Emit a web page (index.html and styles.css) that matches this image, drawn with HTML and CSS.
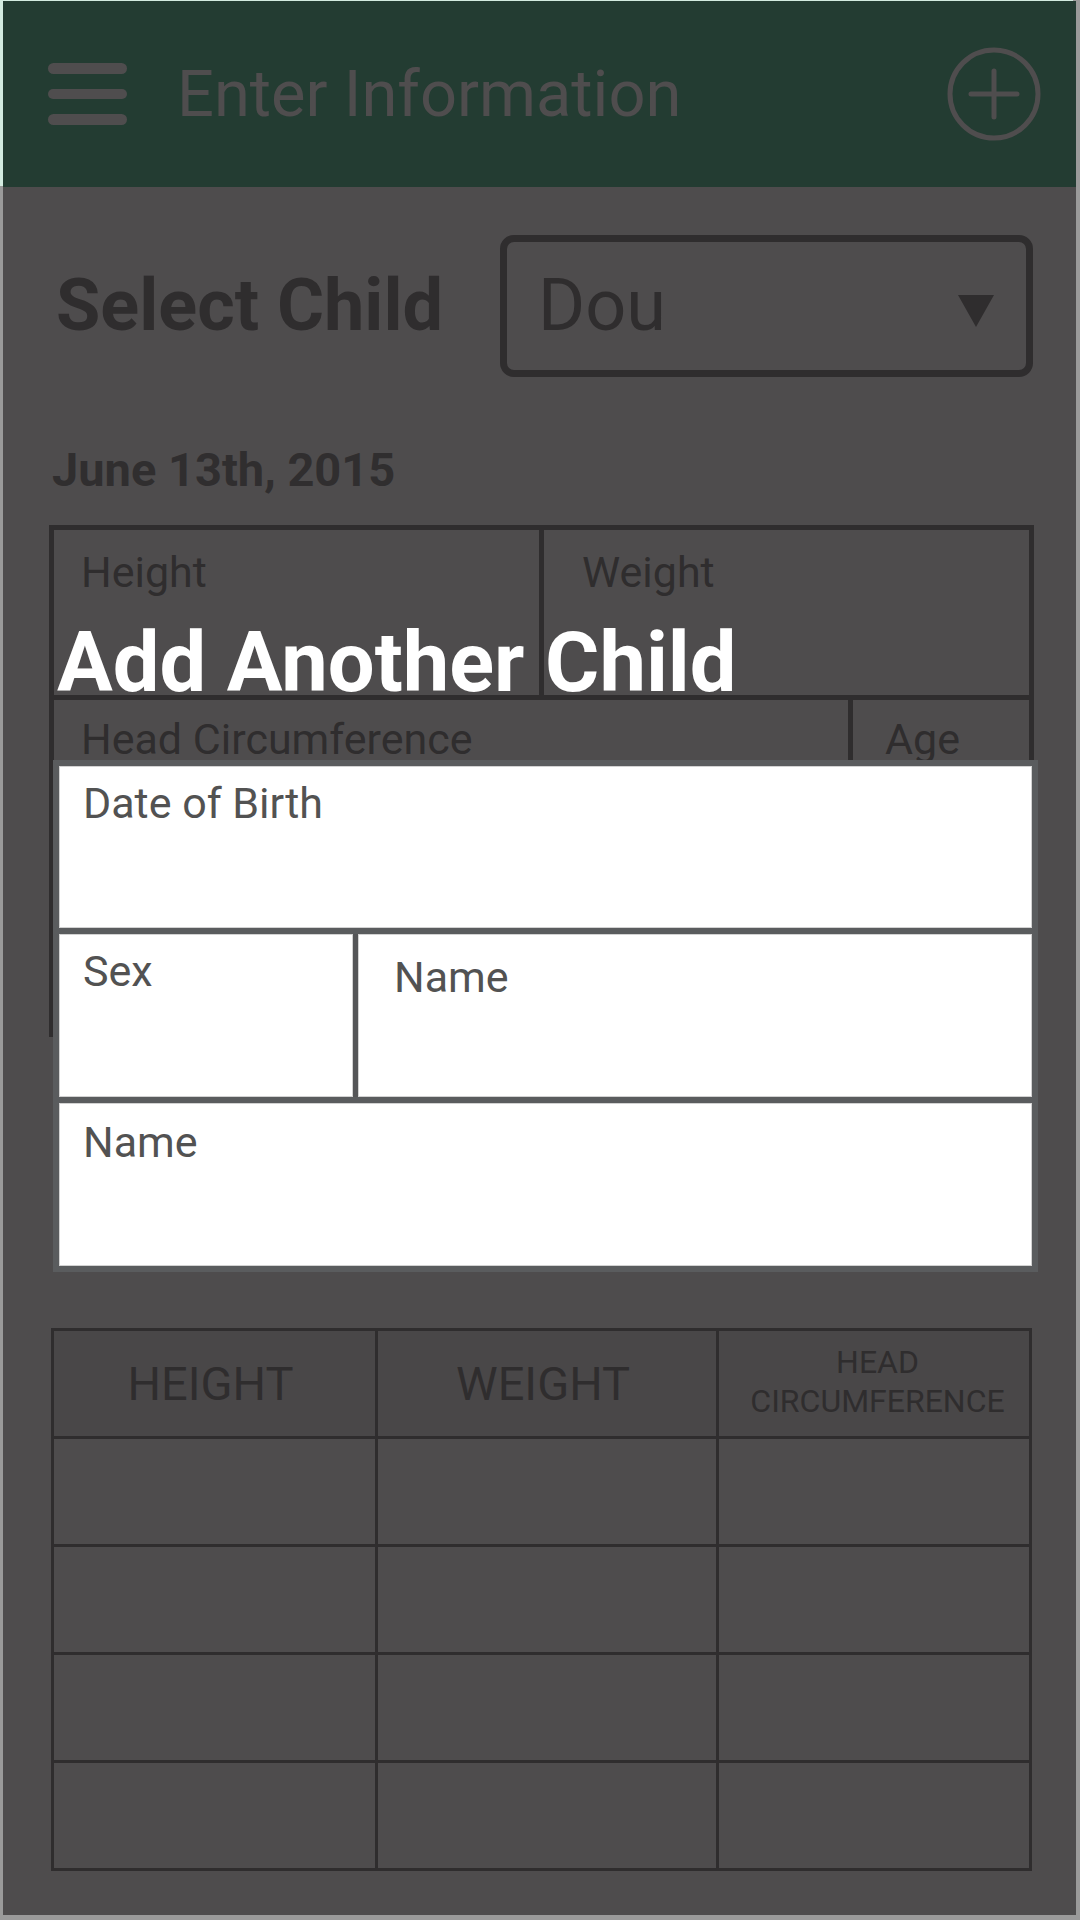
FILE: index.html
```html
<!DOCTYPE html>
<html lang="en">
<head>
<meta charset="utf-8">
<title>Enter Information</title>
<link rel="stylesheet" href="styles.css">
</head>
<body>
<div class="screen">
  <header class="appbar">
    <div class="hamburger"><span></span><span></span><span></span></div>
    <h1 class="appbar-title">Enter Information</h1>
    <svg class="add-icon" viewBox="0 0 96 96" width="96" height="96" aria-hidden="true">
      <circle cx="48" cy="48" r="44" fill="none" stroke="#4f4d4e" stroke-width="5"/>
      <path d="M48 25 V71 M25 48 H71" stroke="#4f4d4e" stroke-width="5" stroke-linecap="round"/>
    </svg>
  </header>

  <main class="content">
    <div class="select-row">
      <span class="select-label">Select Child</span>
      <div class="dropdown">
        <span class="dropdown-value">Dou</span>
        <span class="dropdown-arrow"></span>
      </div>
    </div>

    <div class="date">June 13th, 2015</div>

    <div class="measure">
      <div class="measure-row measure-row--top">
        <div class="mcell mcell--half"><span class="mlabel">Height</span></div>
        <div class="mcell mcell--half"><span class="mlabel mlabel--weight">Weight</span></div>
      </div>
      <div class="measure-row measure-row--bottom">
        <div class="mcell mcell--wide"><span class="mlabel mlabel--low">Head Circumference</span></div>
        <div class="mcell mcell--age"><span class="mlabel mlabel--low mlabel--age">Age</span></div>
      </div>
    </div>

    <div class="history">
      <div class="hcell hcell--head"><span class="hlabel hlabel--left">HEIGHT</span></div>
      <div class="hcell hcell--head"><span class="hlabel hlabel--left">WEIGHT</span></div>
      <div class="hcell hcell--head"><span class="hlabel hlabel--small">HEAD<br>CIRCUMFERENCE</span></div>
      <div class="hcell"></div><div class="hcell"></div><div class="hcell"></div>
      <div class="hcell"></div><div class="hcell"></div><div class="hcell"></div>
      <div class="hcell"></div><div class="hcell"></div><div class="hcell"></div>
      <div class="hcell"></div><div class="hcell"></div><div class="hcell"></div>
    </div>
  </main>

  <section class="modal">
    <h2 class="modal-title">Add Another Child</h2>
    <div class="modal-form">
      <div class="field field--dob"><span class="flabel">Date of Birth</span></div>
      <div class="field-row">
        <div class="field field--sex"><span class="flabel">Sex</span></div>
        <div class="field field--name2"><span class="flabel">Name</span></div>
      </div>
      <div class="field field--name3"><span class="flabel">Name</span></div>
    </div>
  </section>
</div>
</body>
</html>
```

FILE: styles.css
```css
* { box-sizing: border-box; }

html, body {
  margin: 0;
  padding: 0;
}

body {
  width: 1080px;
  height: 1920px;
  background: #9a9a9a;
  font-family: Roboto, "Noto Sans", "Liberation Sans", sans-serif;
  overflow: hidden;
}

.screen {
  position: relative;
  margin: 1px 4px 0 3px;
  height: 1914px;
  background: #4e4c4d;
}

/* ---------- app bar ---------- */
.appbar {
  height: 186px;
  background: #233c32;
  display: flex;
  align-items: center;
  padding: 0 34px 0 45px;
  box-shadow: -3px -1px 0 #d3ebe0;
}

.hamburger {
  width: 79px;
  display: flex;
  flex-direction: column;
  gap: 15px;
}
.hamburger span {
  display: block;
  height: 10.5px;
  border-radius: 6px;
  background: #4f4d4e;
}

.appbar-title {
  margin: 0 0 0 50px;
  flex: 1;
  font-size: 65px;
  font-weight: 400;
  line-height: 76px;
  color: #4f4d4e;
}

.add-icon {
  display: block;
  flex: none;
}

/* ---------- content ---------- */
.content {
  padding: 0 44px 0 48px;
  display: flex;
  flex-direction: column;
}

.select-row {
  margin-top: 48px;
  display: flex;
  align-items: center;
  justify-content: space-between;
  padding-left: 5px;
}

.select-label {
  font-size: 72px;
  font-weight: 700;
  line-height: 84px;
  color: #2f2d2e;
}

.dropdown {
  width: 533px;
  height: 142px;
  margin-right: -1px;
  border: 7px solid #2f2d2e;
  border-radius: 14px;
  display: flex;
  align-items: center;
  justify-content: space-between;
  padding: 0 32px 0 31px;
}

.dropdown-value {
  font-size: 72px;
  line-height: 84px;
  color: #2f2d2e;
}

.dropdown-arrow {
  width: 0;
  height: 0;
  margin-top: 10px;
  border-left: 18.5px solid transparent;
  border-right: 18.5px solid transparent;
  border-top: 32px solid #2f2d2e;
}

.date {
  margin-top: 65px;
  padding-left: 1px;
  font-size: 47px;
  font-weight: 700;
  line-height: 56px;
  color: #302e2f;
}

/* ---------- measurement form (under the modal) ---------- */
.measure {
  margin: 27px -2px 0 -2px;
  height: 512px;
  background: #2f2d2e;
  padding: 5px;
  display: flex;
  flex-direction: column;
  gap: 5px;
}

.measure-row {
  display: flex;
  gap: 5px;
}
.measure-row--top { height: 165px; }
.measure-row--bottom { flex: 1; }

.mcell {
  background: #4e4c4d;
}
.mcell--half { flex: 1; }
.mcell--wide { flex: 1; }
.mcell--age { width: 176px; }

.mlabel {
  display: block;
  padding: 17px 0 0 27px;
  font-size: 43px;
  line-height: 50px;
  color: #2f2d2e;
}
.mlabel--weight { padding-left: 38px; }
.mlabel--low { padding-top: 14px; }
.mlabel--age { padding-left: 32px; }

/* ---------- history table ---------- */
.history {
  margin-top: 291px;
  display: grid;
  grid-template-columns: 321px 338px 310px;
  grid-auto-rows: 105px;
  gap: 3px;
  padding: 3px;
  background: #2f2d2e;
}

.hcell {
  background: #4e4c4d;
}
.hcell--head {
  background: #494748;
  display: flex;
  align-items: center;
  justify-content: center;
  text-align: center;
}

.hlabel {
  font-size: 47px;
  line-height: 55px;
  color: #2f2d2e;
}
.hlabel--left { margin-right: 8px; }
.hlabel--small {
  font-size: 32px;
  line-height: 39px;
  margin: -4px 0 0 7px;
}

/* ---------- modal ---------- */
.modal {
  position: absolute;
  left: 50px;
  top: 613px;
  width: 985px;
}

.modal-title {
  margin: 0;
  padding-left: 4px;
  font-size: 83px;
  font-weight: 700;
  line-height: 97px;
  color: #ffffff;
}

.modal-form {
  margin-top: 49px;
  background: #5a5c5e;
  padding: 6px;
  display: flex;
  flex-direction: column;
  gap: 6px;
}

.field {
  background: #ffffff;
  border: 1px solid #d2d2d2;
  height: 163px;
}
.field--dob { height: 162px; padding: 11px 0 0 23px; }

.field-row {
  display: flex;
  gap: 5px;
  height: 163px;
  background: #555658;
}
.field--sex { width: 294px; padding: 11px 0 0 23px; }
.field--name2 { flex: 1; padding: 17px 0 0 35px; }
.field--name3 { padding: 13px 0 0 23px; }

.flabel {
  display: block;
  font-size: 43px;
  line-height: 50px;
  color: #525252;
}
```
